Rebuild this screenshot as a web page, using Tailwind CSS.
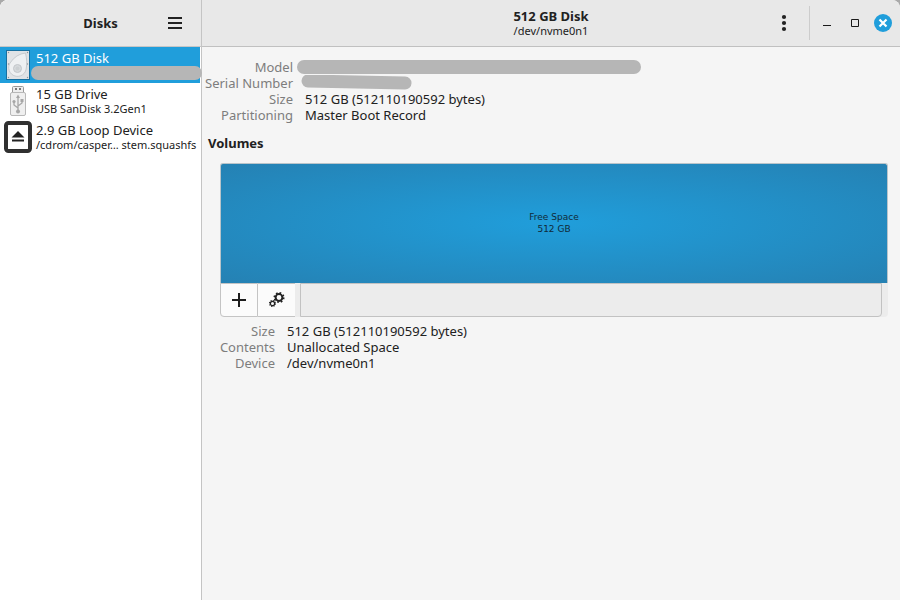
<!DOCTYPE html>
<html lang="en">
<head>
<meta charset="utf-8">
<meta name="viewport" content="width=device-width, initial-scale=1">
<title>Disks</title>
<script src="https://cdn.jsdelivr.net/npm/@tailwindcss/browser@4"></script>
</head>
<body class="bg-[#a9a9a9]">
<div class="flex h-screen overflow-hidden rounded-t-lg bg-[#f5f5f5] font-['Noto_Sans',sans-serif] text-[13px] leading-4 text-[#212121]">
  <aside class="flex w-[202px] shrink-0 flex-col border-r border-[#c4c4c4] bg-white">
    <header class="grid h-[47px] shrink-0 grid-cols-[1fr_auto_1fr] items-center border-b border-[#c6c6c6] bg-[#e8e8e8]">
      <h1 class="col-start-2 font-bold">Disks</h1>
      <button type="button" aria-label="Application menu" class="mr-4 justify-self-end p-0.5">
        <svg class="block" width="16" height="14" viewBox="0 0 16 14" fill="#222"><path d="M1 1h14v2H1zM1 6h14v2H1zM1 11h14v2H1z"/></svg>
      </button>
    </header>
    <nav aria-label="Drives" class="flex flex-col">
      <a href="#disk" aria-current="page" class="relative mr-px flex h-9 items-center gap-1 bg-[#209edb] px-1 text-white">
        <svg class="shrink-0" width="28" height="32" viewBox="0 0 28 32">
          <rect x="2" y="1" width="24" height="30" fill="#1770a0"/>
          <rect x="3" y="2" width="22" height="28" fill="#e0e3e6"/>
          <path d="M21.500 4C23 10 23 15 22.300 19A8.800 8.800 0 1 1 6 14Q12 5 21.500 4z" fill="#eef0f2" stroke="#c6cace"/>
          <circle cx="13.500" cy="19.500" r="4" fill="#d6d9dc" stroke="#c3c7cb"/><circle cx="13.500" cy="19.500" r="2" fill="#cbcfd2"/>
          <g fill="#8e9498"><circle cx="4.500" cy="3.500" r=".7"/><circle cx="23.500" cy="3.500" r=".7"/><circle cx="4.500" cy="15" r=".7"/><circle cx="23.500" cy="15" r=".7"/><circle cx="4.500" cy="28.500" r=".7"/><circle cx="23.500" cy="28.500" r=".7"/></g>
        </svg>
        <span class="self-start pt-[3px]">512 GB Disk</span>
        <span class="absolute -right-0.5 bottom-[3px] left-[31px] h-3.5 rounded-full bg-[#b6b6b6]"></span>
      </a>
      <a href="#drive" class="flex h-9 items-center gap-1 px-1">
        <svg class="shrink-0" width="28" height="32" viewBox="0 0 28 32">
          <rect x="8.500" y="1.500" width="11" height="7" rx="1" fill="#eee" stroke="#999"/>
          <path d="M11 3h2v2h-2zM15 3h2v2h-2z" fill="#777"/>
          <rect x="6.500" y="7.500" width="15" height="23" rx="1.500" fill="#efefef" stroke="#b8b8b8"/>
          <g fill="none" stroke="#a6a6a6" stroke-width="1.300"><path d="M14 12v14M14 23l-4-3v-3M14 21l4-3v-3"/></g>
          <path d="M14 9.500l2 3.500h-4zM16.500 14h3v3h-3z" fill="#a6a6a6"/><circle cx="10" cy="16.500" r="1.600" fill="#a6a6a6"/><circle cx="14" cy="26.500" r="2" fill="#a6a6a6"/>
        </svg>
        <span class="flex min-w-0 flex-col"><span>15 GB Drive</span><span class="text-[11px] leading-[14px]">USB SanDisk 3.2Gen1</span></span>
      </a>
      <a href="#loop" class="flex h-9 items-center gap-1 px-1">
        <svg class="shrink-0" width="28" height="32" viewBox="0 0 28 32">
          <rect x="2" y="2" width="24" height="28" rx="2.500" fill="#fff" stroke="#303030" stroke-width="4"/>
          <path d="M14 10l6.500 6.500h-13zM8 18.500h12v2H8z" fill="#222"/>
        </svg>
        <span class="flex min-w-0 flex-col whitespace-nowrap"><span>2.9 GB Loop Device</span><span class="text-[11px] leading-[14px]">/cdrom/casper… stem.squashfs</span></span>
      </a>
    </nav>
  </aside>

  <div class="flex min-w-0 flex-1 flex-col">
    <header class="grid h-[47px] shrink-0 grid-cols-[1fr_auto_1fr] items-center border-b border-[#c0c0c0] bg-[#e8e8e8]">
      <div class="col-start-2 text-center">
        <h2 class="font-bold">512 GB Disk</h2>
        <p class="text-[11px] leading-[14px]">/dev/nvme0n1</p>
      </div>
      <div class="flex items-center justify-self-end pr-2">
        <button type="button" aria-label="Drive options" class="mr-[19px]"><svg class="block" width="12" height="18" viewBox="0 0 12 18" fill="#222"><circle cx="6" cy="3" r="2.100"/><circle cx="6" cy="9" r="2.100"/><circle cx="6" cy="15" r="2.100"/></svg></button>
        <span class="h-[34px] w-px bg-[#cccccc]"></span>
        <button type="button" aria-label="Minimize" class="ml-2"><svg class="block" width="18" height="18" viewBox="0 0 18 18"><path d="M5 11h8v1H5z" fill="#1a1a1a"/></svg></button>
        <button type="button" aria-label="Maximize" class="ml-2.5"><svg class="block" width="18" height="18" viewBox="0 0 18 18"><path d="M5.500 5.500h7v7h-7z" fill="none" stroke="#1a1a1a"/></svg></button>
        <button type="button" aria-label="Close" class="ml-2.5"><svg class="block" width="18" height="18" viewBox="0 0 18 18"><circle cx="9" cy="9" r="9" fill="#209edb"/><path d="M5.500 5.500l7 7m0-7l-7 7" stroke="#fff" stroke-width="2.200"/></svg></button>
      </div>
    </header>

    <main class="flex-1 pt-3 pr-3 pl-1.5">
      <dl class="grid grid-cols-[85px_1fr] gap-x-3">
        <dt class="text-right whitespace-nowrap text-[#7d7d7d]">Model</dt>
        <dd class="-ml-2 flex items-center"><span class="h-3.5 w-[344px] rounded-full bg-[#b6b6b6]"></span></dd>
        <dt class="flex justify-end whitespace-nowrap text-[#7d7d7d]">Serial Number</dt>
        <dd class="-ml-1 h-4"><svg class="block" width="112" height="16" viewBox="0 0 112 16"><path d="M7 6L104 8" stroke="#b6b6b6" stroke-width="13" stroke-linecap="round"/></svg></dd>
        <dt class="text-right text-[#7d7d7d]">Size</dt>
        <dd>512 GB (512110190592 bytes)</dd>
        <dt class="text-right text-[#7d7d7d]">Partitioning</dt>
        <dd>Master Boot Record</dd>
      </dl>
      <h3 class="mt-3 font-bold">Volumes</h3>
      <section aria-label="Volumes" class="mt-3 ml-3">
        <button type="button" class="flex h-[120px] w-full flex-col items-center justify-center rounded-t-[3px] border border-b-0 border-[#b9c4ca] bg-[radial-gradient(ellipse_at_center,#209edb_0%,#2581b3_100%)] bg-origin-border pb-0.5 font-['DejaVu_Sans',sans-serif] text-[9px] leading-3 text-[#102a38]">
          <span>Free Space</span><span>512 GB</span>
        </button>
        <div class="flex h-[34px] rounded-b bg-[#ececec] pr-1.5">
          <button type="button" aria-label="Create partition" class="flex w-[38px] items-center justify-center rounded-bl border border-[#c4c4c4] bg-[#fbfbfb]"><svg width="14" height="14" viewBox="0 0 14 14"><path d="M6 0h2v6h6v2H8v6H6V8H0V6h6z" fill="#1c1c1c"/></svg></button>
          <button type="button" aria-label="Partition options" class="flex w-[37px] items-center justify-center border-y border-[#c4c4c4] bg-[#fbfbfb]">
            <svg width="16" height="16" viewBox="0 0 16 16" fill="none" stroke="#222">
              <circle cx="10" cy="5.500" r="3.400" stroke-width="2"/><circle cx="10" cy="5.500" r="4.700" stroke-width="1.700" stroke-dasharray="1.700 1.990"/>
              <circle cx="3.500" cy="11.500" r="2.100" stroke-width="1.200"/><circle cx="3.500" cy="11.500" r="3" stroke-width="1.100" stroke-dasharray="1.200 1.156"/>
            </svg>
          </button>
          <div class="ml-[5px] flex-1 rounded-br border border-[#c2c2c2] bg-[#ececec]"></div>
        </div>
      </section>
      <dl class="mt-1.5 grid grid-cols-[67px_1fr] gap-x-3">
        <dt class="text-right text-[#7d7d7d]">Size</dt><dd>512 GB (512110190592 bytes)</dd>
        <dt class="text-right text-[#7d7d7d]">Contents</dt><dd>Unallocated Space</dd>
        <dt class="text-right text-[#7d7d7d]">Device</dt><dd>/dev/nvme0n1</dd>
      </dl>
    </main>
  </div>
</div>
</body>
</html>
